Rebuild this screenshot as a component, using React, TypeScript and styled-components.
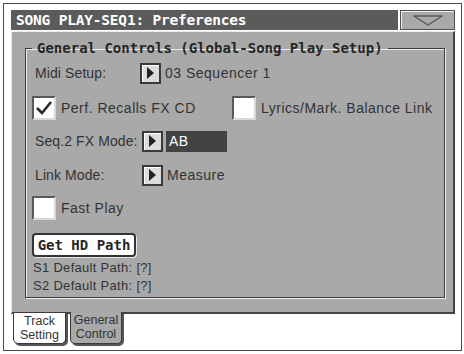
import React from 'react';
import styled, { createGlobalStyle } from 'styled-components';

const GlobalStyle = createGlobalStyle`
  html, body {
    margin: 0;
    padding: 0;
    background: #ffffff;
  }
  body {
    width: 464px;
    height: 354px;
    overflow: hidden;
    font-family: "Liberation Sans", Arial, sans-serif;
  }
`;

const Frame = styled.div`
  box-sizing: border-box;
  margin: 3px;
  width: 459px;
  height: 348px;
  border: 1px solid #4a4a4a;
  padding: 6px 0 0 7px;
  background: #ffffff;
`;

const TitleRow = styled.div`
  display: flex;
  gap: 2px;
  height: 20px;
  width: 444px;
`;

const TitleBar = styled.div`
  box-sizing: border-box;
  flex: 0 0 387px;
  background: #5b5b5b;
  color: #ffffff;
  font-family: "DejaVu Sans Mono", monospace;
  font-weight: bold;
  font-size: 14.5px;
  line-height: 20px;
  padding-left: 5px;
  letter-spacing: -0.2px;
  white-space: nowrap;
`;

const MenuButton = styled.div`
  box-sizing: border-box;
  flex: 0 0 55px;
  background: #a9a9a9;
  border: 1px solid #505050;
  box-shadow: inset 1px 1px 0 #f0f0f0;
  display: flex;
  align-items: center;
  justify-content: center;
`;

const Panel = styled.div`
  box-sizing: border-box;
  width: 444px;
  height: 283px;
  margin-top: 1px;
  background: #a9a9a9;
  border-top: 1px solid #ececec;
  border-left: 1px solid #ececec;
  border-right: 2px solid #444444;
  border-bottom: 2px solid #444444;
  padding: 8px 8px 0 13px;
`;

const Group = styled.fieldset`
  box-sizing: border-box;
  margin: 0;
  height: 258px;
  border: 1px solid #3c3c3c;
  box-shadow: 1px 1px 0 #eeeeee, inset 1px 1px 0 #eeeeee;
  padding: 6px 6px 0 6px;
  display: flex;
  flex-direction: column;
`;

const Legend = styled.legend`
  padding: 0 5px;
  font-family: "DejaVu Sans Mono", monospace;
  font-weight: bold;
  font-size: 14px;
  line-height: 16px;
  color: #262626;
`;

const Row = styled.div<{ $top?: number; $h?: number }>`
  display: flex;
  align-items: center;
  height: ${p => p.$h ?? 22}px;
  margin-top: ${p => p.$top ?? 0}px;
  color: #333333;
  font-size: 14px;
  letter-spacing: 0.5px;
`;

const Label = styled.span<{ $w?: number }>`
  width: ${p => p.$w ?? 107}px;
  margin-left: 3px;
  flex: none;
  white-space: nowrap;
  letter-spacing: 0.1px;
`;

const ArrowBox = styled.div`
  box-sizing: border-box;
  width: 21px;
  height: 21px;
  border: 2px solid #3a3a3a;
  background: #dcdcdc;
  box-shadow: inset 1px 1px 0 #ffffff;
  display: flex;
  align-items: center;
  justify-content: center;
  flex: none;
`;

const Value = styled.span`
  margin-left: 4px;
  white-space: nowrap;
`;

const DarkField = styled.span`
  margin-left: 3px;
  width: 61px;
  height: 21px;
  background: #434343;
  color: #ffffff;
  line-height: 21px;
  padding-left: 3px;
  box-sizing: border-box;
`;

const CheckCell = styled.div<{ $w?: number }>`
  display: flex;
  align-items: center;
  width: ${p => p.$w ?? 200}px;
  flex: none;
`;

const Box = styled.div`
  box-sizing: border-box;
  width: 24px;
  height: 24px;
  background: #ffffff;
  border-top: 2px solid #5a5a5a;
  border-left: 2px solid #5a5a5a;
  border-right: 2px solid #d8d8d8;
  border-bottom: 2px solid #d8d8d8;
  display: flex;
  align-items: center;
  justify-content: center;
  flex: none;
`;

const CheckText = styled.span`
  margin-left: 5px;
  white-space: nowrap;
`;

const PathButton = styled.div`
  box-sizing: border-box;
  width: 104px;
  height: 24px;
  background: #ffffff;
  border: 2px solid #333333;
  border-radius: 4px;
  box-shadow: 1px 1px 0 #e6e6e6;
  font-family: "DejaVu Sans Mono", monospace;
  font-weight: bold;
  font-size: 14px;
  line-height: 20px;
  color: #262626;
  text-align: center;
  margin-top: 13px;
`;

const SmallLine = styled.div<{ $top: number }>`
  font-size: 13px;
  line-height: 14px;
  letter-spacing: 0.3px;
  color: #333333;
  margin-top: ${p => p.$top}px;
  margin-left: 1px;
  white-space: nowrap;
`;

const TabBar = styled.div`
  display: flex;
  gap: 4px;
  padding-left: 2px;
  margin-top: -2px;
`;

const Tab = styled.div<{ $active?: boolean }>`
  box-sizing: border-box;
  width: ${p => (p.$active ? 52 : 53)}px;
  height: 32px;
  background: ${p => (p.$active ? '#a9a9a9' : '#ffffff')};
  border: 1px solid #3a3a3a;
  border-top: ${p => (p.$active ? 'none' : '1px solid #3a3a3a')};
  border-radius: 0 0 5px 5px;
  box-shadow: 2px 2px 0 #555555;
  font-size: 12.5px;
  line-height: 14px;
  color: #333333;
  text-align: center;
  padding-top: 1px;
`;

const TabLine = styled.div`
  height: 14px;
  overflow: hidden;
`;

const Triangle = () => (
  <svg width="30" height="11" viewBox="0 0 30 11">
    <path d="M1 1 L29 1 L15 10 Z" fill="none" stroke="#5a5a5a" strokeWidth="1.3" />
  </svg>
);

const RightArrow = () => (
  <svg width="9" height="12" viewBox="0 0 9 12">
    <path d="M1 0 L8 6 L1 12 Z" fill="#222222" />
  </svg>
);

const Check = () => (
  <svg width="18" height="16" viewBox="0 0 18 16">
    <path d="M2 8 L7 13 L16 2" fill="none" stroke="#2a2a2a" strokeWidth="2.6" />
  </svg>
);

const App = () => {
  return (
    <>
      <GlobalStyle />
      <Frame>
        <TitleRow>
          <TitleBar>SONG PLAY-SEQ1: Preferences</TitleBar>
          <MenuButton>
            <Triangle />
          </MenuButton>
        </TitleRow>
        <Panel>
          <Group>
            <Legend>General Controls (Global-Song Play Setup)</Legend>
            <Row>
              <Label $w={105}>Midi Setup:</Label>
              <ArrowBox>
                <RightArrow />
              </ArrowBox>
              <Value>03 Sequencer 1</Value>
            </Row>
            <Row $top={12} $h={24}>
              <CheckCell>
                <Box>
                  <Check />
                </Box>
                <CheckText>Perf. Recalls FX CD</CheckText>
              </CheckCell>
              <CheckCell>
                <Box />
                <CheckText>Lyrics/Mark. Balance Link</CheckText>
              </CheckCell>
            </Row>
            <Row $top={10}>
              <Label>Seq.2 FX Mode:</Label>
              <ArrowBox>
                <RightArrow />
              </ArrowBox>
              <DarkField>AB</DarkField>
            </Row>
            <Row $top={12}>
              <Label>Link Mode:</Label>
              <ArrowBox>
                <RightArrow />
              </ArrowBox>
              <Value>Measure</Value>
            </Row>
            <Row $top={10} $h={24}>
              <CheckCell>
                <Box />
                <CheckText>Fast Play</CheckText>
              </CheckCell>
            </Row>
            <PathButton>Get HD Path</PathButton>
            <SmallLine $top={4}>S1 Default Path: [?]</SmallLine>
            <SmallLine $top={4}>S2 Default Path: [?]</SmallLine>
          </Group>
        </Panel>
        <TabBar>
          <Tab>
            <TabLine>Track</TabLine>
            <TabLine>Setting</TabLine>
          </Tab>
          <Tab $active>
            <TabLine>General</TabLine>
            <TabLine>Control</TabLine>
          </Tab>
        </TabBar>
      </Frame>
    </>
  );
};

export default App;
